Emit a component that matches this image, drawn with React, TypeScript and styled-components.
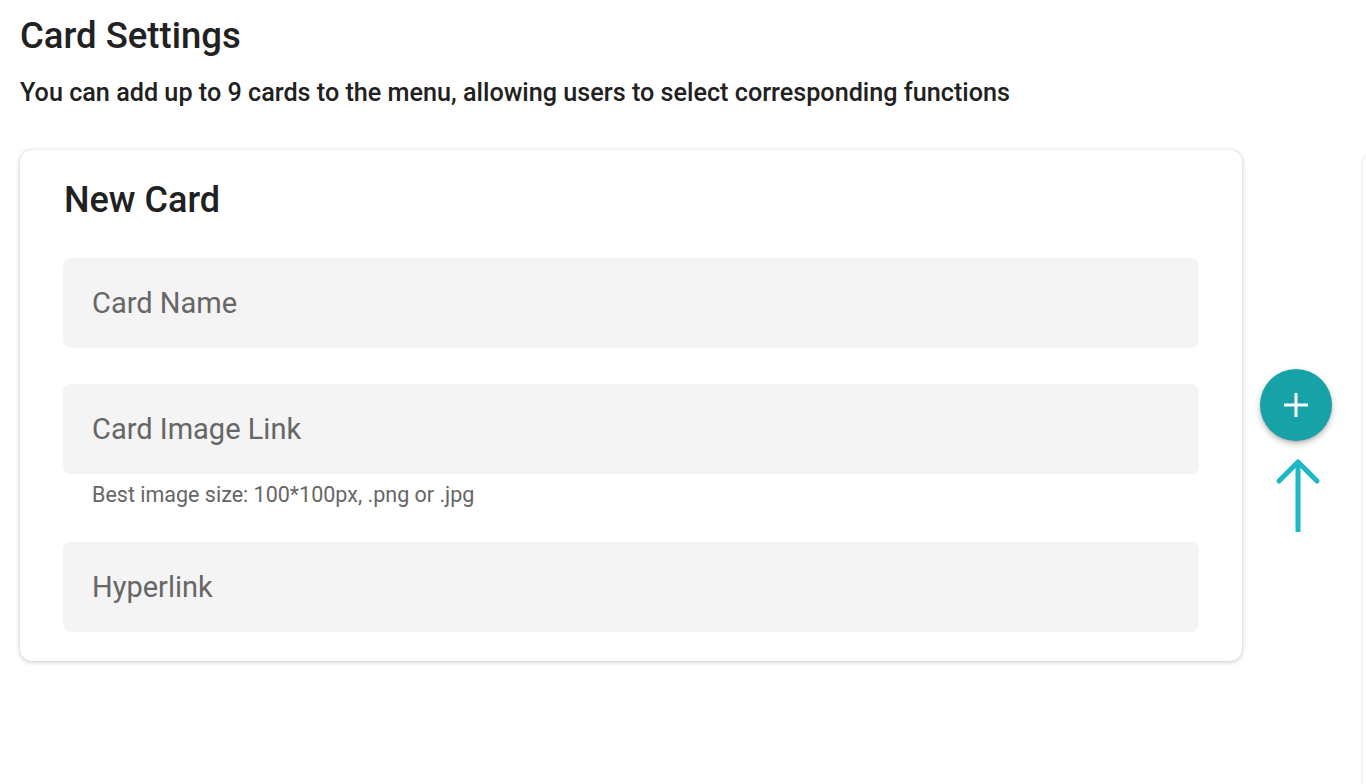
import React from "react";
import styled, { createGlobalStyle } from "styled-components";

const GlobalStyle = createGlobalStyle`
  html, body { margin: 0; padding: 0; background: #ffffff; }
  body { font-family: Roboto, "Noto Sans", sans-serif; color: #212121; overflow: hidden; }
  * { box-sizing: border-box; }
`;

const Page = styled.div`
  width: 1366px;
  height: 784px;
  position: relative;
  padding: 14px 0 0 20px;
  overflow: hidden;
`;

const Title = styled.h1`
  margin: 0;
  font-size: 36.5px;
  font-weight: 500;
  line-height: 44px;
  color: #212121;
`;

const Subtitle = styled.p`
  margin: 20px 0 0;
  font-size: 25.2px;
  font-weight: 500;
  line-height: 30px;
  color: #212121;
`;

const Row = styled.div`
  display: flex;
  align-items: flex-start;
  margin-top: 42px;
`;

const Card = styled.section`
  width: 1222px;
  background: #fff;
  border-radius: 12px;
  box-shadow: 0 1px 5px rgba(0, 0, 0, 0.22), 0 0 1px rgba(0, 0, 0, 0.12);
  padding: 28px 43px 29px 43px;
`;

const CardTitle = styled.h2`
  margin: 0 0 0 1px;
  font-size: 36px;
  font-weight: 500;
  line-height: 44px;
  color: #212121;
`;

const Fields = styled.div`
  display: flex;
  flex-direction: column;
  margin-top: 36px;
`;

const Field = styled.div<{ $gap: number }>`
  margin-bottom: ${(p) => p.$gap}px;
  &:last-child { margin-bottom: 0; }
`;

const Input = styled.input`
  display: block;
  width: 100%;
  height: 90px;
  border: none;
  border-radius: 8px;
  background: #f4f4f4;
  padding: 0 29px;
  font-family: Roboto, "Noto Sans", sans-serif;
  font-size: 29px;
  color: #212121;
  outline: none;
  &::placeholder { color: #666666; }
`;

const Helper = styled.div`
  padding: 9px 29px 0;
  font-size: 21.5px;
  line-height: 24px;
  color: #666666;
`;

const Side = styled.div`
  width: 108px;
  display: flex;
  flex-direction: column;
  align-items: center;
  padding-top: 219px;
`;

const Fab = styled.button`
  width: 72px;
  height: 72px;
  border-radius: 50%;
  border: none;
  background: #17a2a8;
  box-shadow: 0 3px 6px rgba(0, 0, 0, 0.25), 0 1px 2px rgba(0, 0, 0, 0.12);
  display: flex;
  align-items: center;
  justify-content: center;
  padding: 0;
  cursor: pointer;
`;

const Arrow = styled.svg`
  margin-top: 17px;
  margin-left: 4px;
`;

const PeekCard = styled.div`
  position: absolute;
  left: 1363px;
  top: 152px;
  width: 40px;
  height: 700px;
  border-radius: 12px;
  background: #fff;
  box-shadow: 0 1px 4px rgba(0, 0, 0, 0.12);
`;

export default function App() {
  return (
    <>
      <GlobalStyle />
      <Page>
        <Title>Card Settings</Title>
        <Subtitle>You can add up to 9 cards to the menu, allowing users to select corresponding functions</Subtitle>
        <Row>
          <Card>
            <CardTitle>New Card</CardTitle>
            <Fields>
              <Field $gap={36}>
                <Input placeholder="Card Name" />
              </Field>
              <Field $gap={35}>
                <Input placeholder="Card Image Link" />
                <Helper>Best image size: 100*100px, .png or .jpg</Helper>
              </Field>
              <Field $gap={0}>
                <Input placeholder="Hyperlink" />
              </Field>
            </Fields>
          </Card>
          <Side>
            <Fab aria-label="Add card">
              <svg width="26" height="26" viewBox="0 0 26 26">
                <path d="M13 1v24M1 13h24" stroke="#fff" strokeWidth="3" fill="none" />
              </svg>
            </Fab>
            <Arrow width="50" height="74" viewBox="0 0 50 74">
              <path d="M25 4v70" stroke="#1ab9c4" strokeWidth="5" fill="none" />
              <path d="M6 23L25 4l19 19" stroke="#1ab9c4" strokeWidth="5" fill="none" strokeLinecap="round" strokeLinejoin="round" />
            </Arrow>
          </Side>
        </Row>
        <PeekCard />
      </Page>
    </>
  );
}
